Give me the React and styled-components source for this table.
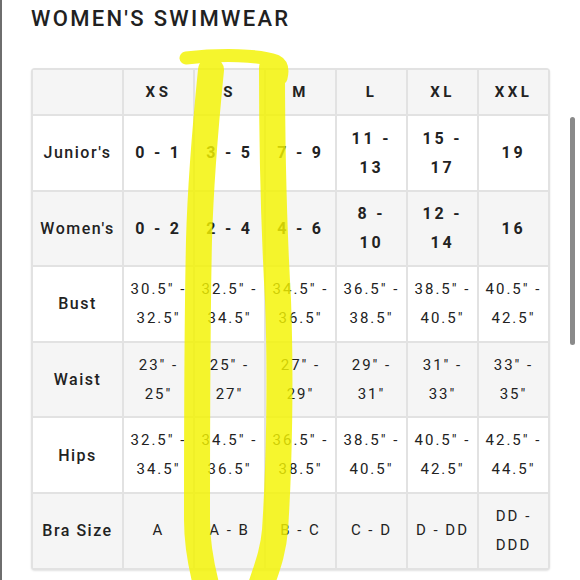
import React from 'react';
import styled, { createGlobalStyle } from 'styled-components';

const Global = createGlobalStyle`
  html, body { margin: 0; padding: 0; background: #fff; }
  body { font-family: Roboto, "Noto Sans", Arial, sans-serif; color: #222; }
`;

const Page = styled.div`
  position: relative;
  width: 580px;
  height: 580px;
  box-sizing: border-box;
  border-left: 2px solid #6e6e6e;
  padding: 5.5px 0 0 29px;
  overflow: hidden;
`;

const Title = styled.h1`
  margin: 0 0 36.5px 0;
  font-size: 22px;
  line-height: 26px;
  font-weight: 500;
  letter-spacing: 2.3px;
  color: #212121;
`;

const Grid = styled.div`
  display: grid;
  grid-template-columns: 89px repeat(6, 69px);
  grid-template-rows: 44px repeat(6, 73.6px);
  gap: 2px;
  padding: 2px;
  width: max-content;
  background: #e2e2e2;
  border-radius: 4px;
  box-shadow: 0 1px 2px rgba(0, 0, 0, 0.12);
`;

const Cell = styled.div`
  display: flex;
  flex-direction: column;
  align-items: center;
  justify-content: center;
  background: ${(p) => (p.$shade ? '#f5f5f5' : '#ffffff')};
  font-size: ${(p) => (p.$bold ? '16px' : '15px')};
  font-weight: ${(p) => (p.$bold ? 700 : 400)};
  letter-spacing: ${(p) => (p.$bold ? '2.8px' : '2px')};
  line-height: 29px;
  color: #222;
  text-align: center;
  white-space: nowrap;
`;

const HeadCell = styled(Cell)`
  font-size: 15px;
  font-weight: 700;
  letter-spacing: 3.5px;
`;

const LabelCell = styled(Cell)`
  font-size: 16px;
  font-weight: 500;
  letter-spacing: 1.5px;
`;

const Line = styled.span`
  display: block;
`;

const Scrollbar = styled.div`
  position: absolute;
  left: 568px;
  top: 117px;
  width: 5px;
  height: 228px;
  border-radius: 3px;
  background: #8a8a8a;
`;

const Marker = styled.svg`
  position: absolute;
  left: 0;
  top: 0;
  width: 580px;
  height: 580px;
  pointer-events: none;
`;

const sizes = ['XS', 'S', 'M', 'L', 'XL', 'XXL'];

const rows = [
  { label: "Junior's", bold: true, cells: [['0 - 1'], ['3 - 5'], ['7 - 9'], ['11 -', '13'], ['15 -', '17'], ['19']] },
  { label: "Women's", bold: true, cells: [['0 - 2'], ['2 - 4'], ['4 - 6'], ['8 -', '10'], ['12 -', '14'], ['16']] },
  { label: 'Bust', cells: [['30.5" -', '32.5"'], ['32.5" -', '34.5"'], ['34.5" -', '36.5"'], ['36.5" -', '38.5"'], ['38.5" -', '40.5"'], ['40.5" -', '42.5"']] },
  { label: 'Waist', cells: [['23" -', '25"'], ['25" -', '27"'], ['27" -', '29"'], ['29" -', '31"'], ['31" -', '33"'], ['33" -', '35"']] },
  { label: 'Hips', cells: [['32.5" -', '34.5"'], ['34.5" -', '36.5"'], ['36.5" -', '38.5"'], ['38.5" -', '40.5"'], ['40.5" -', '42.5"'], ['42.5" -', '44.5"']] },
  { label: 'Bra Size', cells: [['A'], ['A - B'], ['B - C'], ['C - D'], ['D - DD'], ['DD -', 'DDD']] },
];

export default function App() {
  return (
    <>
      <Global />
      <Page>
        <Title>WOMEN'S SWIMWEAR</Title>
        <Grid>
          <HeadCell $shade />
          {sizes.map((s) => (
            <HeadCell key={s} $shade>{s}</HeadCell>
          ))}
          {rows.map((r, i) => (
            <React.Fragment key={r.label}>
              <LabelCell $shade={i % 2 === 1}>{r.label}</LabelCell>
              {r.cells.map((lines, j) => (
                <Cell key={j} $shade={i % 2 === 1} $bold={r.bold}>
                  {lines.map((t, k) => (
                    <Line key={k}>{t}</Line>
                  ))}
                </Cell>
              ))}
            </React.Fragment>
          ))}
        </Grid>
        <Scrollbar />
        <Marker viewBox="0 0 580 580">
          <g opacity="0.82" fill="none" stroke="#f4f400" strokeLinecap="round" strokeLinejoin="round">
            <path d="M184,58 C220,54 258,55 274,61 C280,64 281,70 279,78" strokeWidth="13" />
            <path d="M270,68 C270,150 272,230 276,300 C279,380 277,470 273,530 C271,555 263,572 257,592" strokeWidth="26" />
            <path d="M209,70 C205,110 199,170 197,240 C195,330 195,430 195,520 C195,548 200,570 206,592" strokeWidth="26" />
          </g>
        </Marker>
      </Page>
    </>
  );
}
